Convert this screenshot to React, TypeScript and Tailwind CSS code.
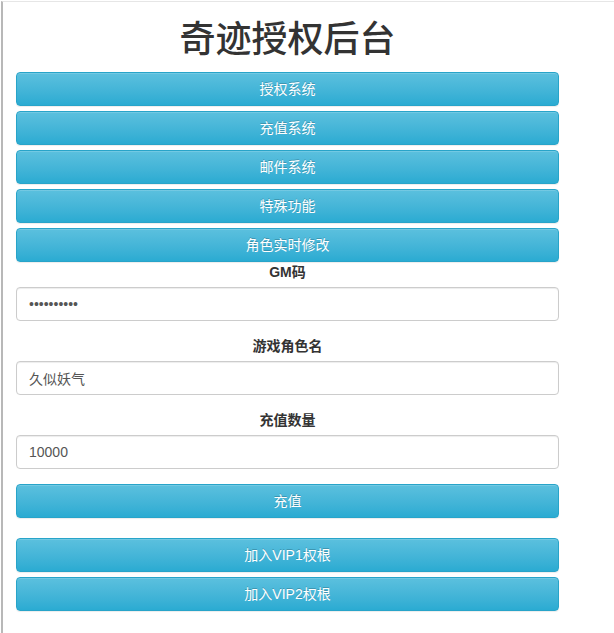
import React from 'react';

const font = { fontFamily: '"Liberation Sans", "Noto Sans CJK SC", sans-serif' };

const btn =
  'block w-full h-[34px] rounded-[4px] border border-[#28a4c9] bg-gradient-to-b from-[#5bc0de] to-[#2aabd2] text-[14px] leading-[20px] text-white [text-shadow:0_-1px_0_rgba(0,0,0,0.2)] shadow-[inset_0_1px_0_rgba(255,255,255,0.15),0_1px_1px_rgba(0,0,0,0.075)]';

const input =
  'block w-full h-[34px] rounded-[4px] border border-[#ccc] bg-white px-3 text-[14px] text-[#555] shadow-[inset_0_1px_1px_rgba(0,0,0,0.075)] outline-none';

const Field: React.FC<{ label: string; children: React.ReactNode; last?: boolean }> = ({ label, children, last }) => (
  <div className={last ? '' : 'mb-[15px]'}>
    <label className="block text-center text-[14px] leading-[20px] font-bold text-[#333] mb-[5px]">{label}</label>
    {children}
  </div>
);

export default function App() {
  const menu = ['授权系统', '充值系统', '邮件系统', '特殊功能', '角色实时修改'];

  return (
    <div className="min-h-[633px] bg-white pl-px pt-px" style={font}>
      <div className="min-h-[632px] border-l-2 border-t border-l-[#b8b8b8] border-t-[#e6e6e6] pl-[13px]">
        <div className="w-[543px]">
          <h1 className="mt-[18px] mb-[12px] text-center text-[36px] leading-[40px] font-medium text-[#333]">
            奇迹授权后台
          </h1>

          <div className="flex flex-col gap-[5px]">
            {menu.map((m) => (
              <button key={m} className={btn}>
                {m}
              </button>
            ))}
          </div>

          <Field label="GM码">
            <input type="password" className={input} defaultValue="1234567890" />
          </Field>
          <Field label="游戏角色名">
            <input type="text" className={input} defaultValue="久似妖气" />
          </Field>
          <Field label="充值数量">
            <input type="text" className={input} defaultValue="10000" />
          </Field>

          <button className={btn}>充值</button>

          <div className="mt-[20px] flex flex-col gap-[5px]">
            <button className={btn}>加入VIP1权根</button>
            <button className={btn}>加入VIP2权根</button>
          </div>
        </div>
      </div>
    </div>
  );
}
